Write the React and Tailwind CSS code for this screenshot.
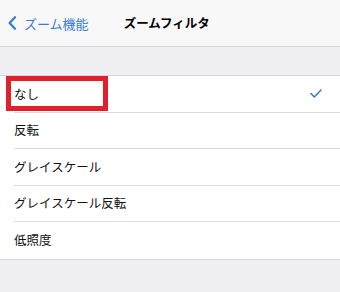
import React from 'react';

const rows = ['なし', '反転', 'グレイスケール', 'グレイスケール反転', '低照度'];

const font = { fontFamily: '"Noto Sans CJK JP", "Noto Sans", sans-serif' };

export default function App() {
  return (
    <div className="w-[340px] h-[292px] bg-[#efeff4] overflow-hidden" style={font}>
      {/* nav bar */}
      <div className="relative h-[47px] bg-[#f8f8f8] border-b border-[#d6d6da] flex items-center">
        <div className="flex items-center pl-[8px] text-[#3a7bd5]">
          <svg width="9" height="14" viewBox="0 0 9 14" fill="none">
            <path d="M7 1.2 L1.6 7 L7 12.8" stroke="#3a7bd5" strokeWidth="2.2" strokeLinecap="round" strokeLinejoin="round" />
          </svg>
          <span className="ml-[7px] text-[13px] leading-none">ズーム機能</span>
        </div>
        <span className="ml-[35px] text-[12.5px] font-bold text-black leading-none">ズームフィルタ</span>
      </div>

      <div className="h-[28px]" />

      {/* list */}
      <div className="bg-white border-t border-b border-[#d6d6da]">
        {rows.map((r, i) => (
          <div key={r} className="relative h-[36.6px] pl-[14px] flex">
            <div className={`flex-1 flex items-center pr-[18px] ${i < rows.length - 1 ? 'border-b border-[#dcdce0]' : ''}`}>
              <span className="flex-1 text-[12.5px] text-[#111] leading-none">{r}</span>
              {i === 0 && (
                <svg width="12" height="9" viewBox="0 0 12 9" fill="none">
                  <path d="M1 4.5 L4.3 8 L11 1" stroke="#3a7bd5" strokeWidth="1.6" strokeLinecap="round" strokeLinejoin="round" />
                </svg>
              )}
            </div>
            {i === 0 && (
              <div className="absolute left-[6px] top-0 w-[102px] h-[35px] border-[5px] border-[#e0202a]" />
            )}
          </div>
        ))}
      </div>
    </div>
  );
}
